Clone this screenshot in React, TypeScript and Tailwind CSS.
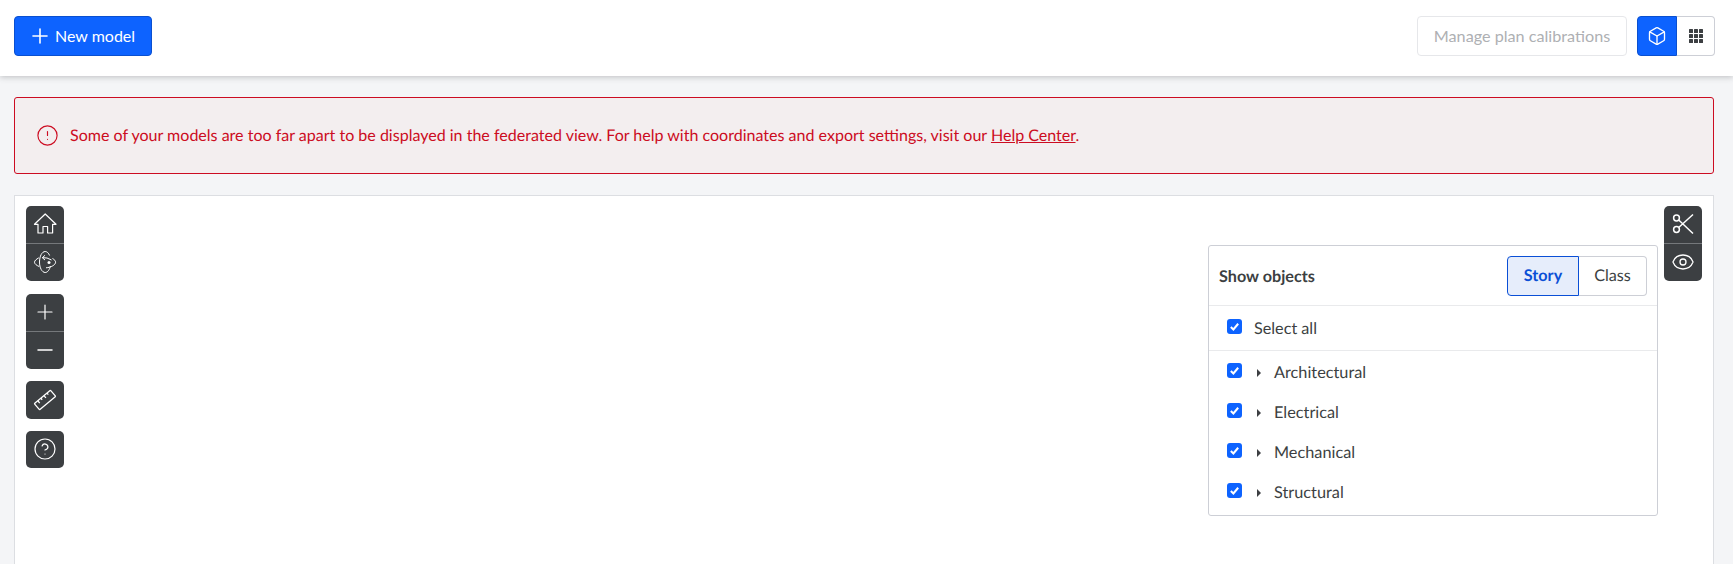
import React from "react";
import { Plus, Minus, Box, CircleHelp, Eye, CircleAlert } from "lucide-react";

const categories = ["Architectural", "Electrical", "Mechanical", "Structural"];

function HomeIcon() {
  return (
    <svg width="24" height="24" viewBox="0 0 24 24" fill="none" stroke="currentColor" strokeWidth="1.2" strokeLinejoin="round">
      <path d="M12.2 2 1.5 12.3H5V21h5v-6.5h4.6V21h5v-8.7H23Z" />
    </svg>
  );
}

function OrbitIcon() {
  return (
    <svg width="24" height="24" viewBox="0 0 24 24" fill="none" stroke="currentColor" strokeWidth="1">
      <path d="M5.8 7.8C3.2 9.2 1.5 10.800 1.500 12.200c0 1.600 2 3.200 4.800 4.400M19.500 8.500c2 1.100 3.100 2.400 3.100 3.700 0 2.600-4.600 5.300-9.600 5.600" />
      <path d="M16.600 5.500C15.600 3 14 1.500 12.200 1.500 9 1.500 6.500 6.200 6.500 12s2.500 10.500 5.700 10.500c2.400 0 4.400-2.700 5.200-6.500" />
      <path d="M18.500 10 14 8 9.500 7.700M12 5.300 9.300 7.700 12 10" />
      <circle cx="16" cy="12.500" r="1.500" fill="currentColor" stroke="none" />
    </svg>
  );
}

function RulerIcon() {
  return (
    <svg width="24" height="24" viewBox="0 0 24 24" fill="none" stroke="currentColor" strokeWidth="1.3" strokeLinejoin="round">
      <g transform="rotate(-40 12 12)">
        <rect x="1.500" y="8" width="21" height="8" rx="0.500" />
        <path d="M6 8v3M10 8v2M14 8v3M18 8v2" />
      </g>
    </svg>
  );
}

function ScissorsIcon() {
  return (
    <svg width="24" height="24" viewBox="0 0 24 24" fill="none" stroke="currentColor" strokeWidth="1.500">
      <circle cx="5.500" cy="6" r="2.900" />
      <circle cx="5.500" cy="17.500" r="2.900" />
      <path d="M7.700 8 22 21.500M7.700 15.500 22 2.500" />
    </svg>
  );
}

function GridIcon() {
  return (
    <svg width="14" height="14" viewBox="0 0 14 14" fill="#3c3f42">
      {[0, 5, 10].map((y) =>
        [0, 5, 10].map((x) => <rect key={`${x}-${y}`} x={x} y={y} width="4" height="4" rx="0.500" />)
      )}
    </svg>
  );
}

function Check() {
  return (
    <span className="mb-[5px] flex h-[15px] w-[15px] shrink-0 items-center justify-center rounded-[3px] bg-[#0d63ff]">
      <svg width="11" height="11" viewBox="0 0 12 12" fill="none" stroke="white" strokeWidth="2.2">
        <path d="M2 6.500 4.800 9.200 10 3" />
      </svg>
    </span>
  );
}

function ToolGroup({ children }: { children: React.ReactNode }) {
  return <div className="flex w-[38px] flex-col divide-y divide-[#75787b] rounded-[5px] bg-[#3c3f42] text-white">{children}</div>;
}

function Tool({ children }: { children: React.ReactNode }) {
  return <div className="flex h-[37.5px] items-center justify-center">{children}</div>;
}

export default function App() {
  return (
    <div className="flex h-[564px] flex-col overflow-hidden bg-[#f4f5f7] font-['Lato','Noto_Sans',sans-serif] text-[16.2px] text-[#3c3f42] [text-rendering:geometricPrecision]">
      <header className="flex h-[76px] shrink-0 items-center justify-between bg-white pb-[4px] pl-[14px] pr-[18px] shadow-[0_1px_6px_rgba(60,63,66,0.3)]">
        <button className="flex h-[40px] w-[138px] items-center gap-[3px] rounded-[4px] border border-[#0a50d0] bg-[#0d63ff] pl-[13px] text-[16px] text-white">
          <Plus size={24} strokeWidth={1.6} />
          New model
        </button>
        <div className="flex items-center gap-[10px]">
          <button className="h-[40px] w-[210px] rounded-[4px] border border-[#e6e7ea] bg-white text-[#aeb0b3]">
            Manage plan calibrations
          </button>
          <div className="flex h-[40px]">
            <span className="flex w-[40px] items-center justify-center rounded-l-[4px] border border-[#0a50d0] bg-[#0d63ff] text-white">
              <Box size={20} strokeWidth={1.6} />
            </span>
            <span className="flex w-[38px] items-center justify-center rounded-r-[4px] border border-l-0 border-[#cdcfd6] bg-white">
              <GridIcon />
            </span>
          </div>
        </div>
      </header>

      <main className="flex min-h-0 flex-1 flex-col gap-[21px] overflow-hidden pl-[14px] pr-[19px] pt-[21px]">
        <div className="flex h-[77px] shrink-0 items-center gap-[11px] rounded-[3px] border border-[#cc0c22] bg-[#f3eeef] pl-[21px] text-[16.05px] text-[#cc0c22]">
          <CircleAlert size={23} strokeWidth={1.2} />
          <p className="pt-[2px]">
            Some of your models are too far apart to be displayed in the federated view. For help with coordinates and export settings, visit our{" "}
            <span className="underline">Help Center</span>.
          </p>
        </div>

        <section className="flex h-[420px] shrink-0 justify-between border border-[#dcdee2] bg-white pl-[11px] pr-[11px] pt-[10px]">
          <div className="flex flex-col">
            <ToolGroup>
              <Tool><HomeIcon /></Tool>
              <Tool><OrbitIcon /></Tool>
            </ToolGroup>
            <div className="mt-[13px]">
              <ToolGroup>
                <Tool><Plus size={24} strokeWidth={1.2} /></Tool>
                <Tool><Minus size={24} strokeWidth={1.5} /></Tool>
              </ToolGroup>
            </div>
            <div className="mt-[12px]">
              <ToolGroup>
                <Tool><RulerIcon /></Tool>
              </ToolGroup>
            </div>
            <div className="mt-[12px]">
              <ToolGroup>
                <Tool><CircleHelp size={24} strokeWidth={1.2} /></Tool>
              </ToolGroup>
            </div>
          </div>

          <div className="flex items-start gap-[6px]">
            <div className="mt-[39px] w-[450px] rounded-[3px] border border-[#cdcfd6] bg-white">
              <div className="flex h-[60px] items-center justify-between border-b border-[#e9eaec] pl-[10px] pr-[10px]">
                <span className="pt-[3px] font-bold">Show objects</span>
                <div className="flex h-[40px] text-center">
                  <span className="flex w-[72px] items-center justify-center rounded-l-[4px] border border-[#0a4fd6] bg-[#e6edfb] pt-[2px] font-bold text-[#0a4fd6]">Story</span>
                  <span className="flex w-[68px] items-center justify-center rounded-r-[4px] border border-l-0 border-[#cdcfd6] pt-[2px]">Class</span>
                </div>
              </div>
              <div className="flex h-[45px] items-center gap-[12px] border-b border-[#e9eaec] pl-[18px] pt-[2px]">
                <Check />
                Select all
              </div>
              <ul className="pb-[3px] pt-[1px] text-[16.3px]">
                {categories.map((name) => (
                  <li key={name} className="flex h-[40px] items-center pl-[18px] pt-[2px]">
                    <Check />
                    <span className="mb-[1px] ml-[15px] mr-[13px] h-0 w-0 border-y-[4px] border-l-[4px] border-y-transparent border-l-[#3c3f42]" />
                    {name}
                  </li>
                ))}
              </ul>
            </div>
            <ToolGroup>
              <Tool><ScissorsIcon /></Tool>
              <Tool><Eye size={24} strokeWidth={1.3} /></Tool>
            </ToolGroup>
          </div>
        </section>
      </main>
    </div>
  );
}
